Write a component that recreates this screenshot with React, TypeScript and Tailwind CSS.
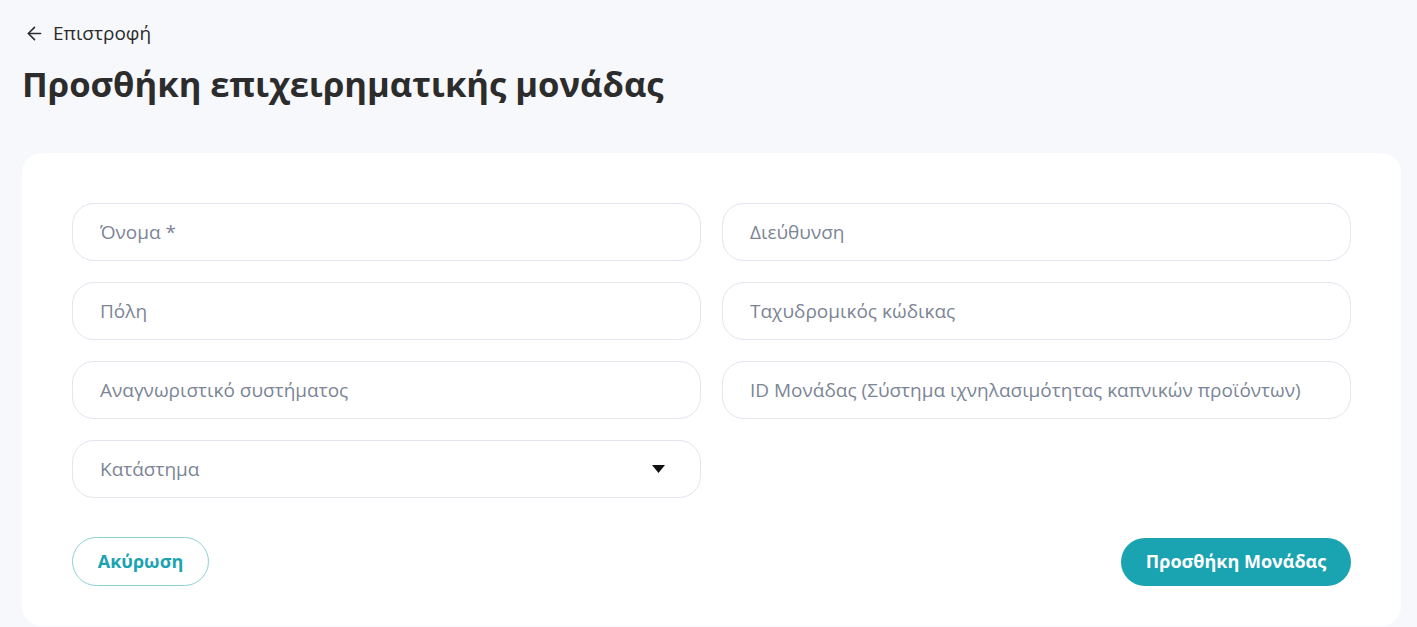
import { ArrowLeft } from 'lucide-react';

const FIELDS: [string, string][] = [
  ['Όνομα *', 'Διεύθυνση'],
  ['Πόλη', 'Ταχυδρομικός κώδικας'],
  ['Αναγνωριστικό συστήματος', 'ID Μονάδας (Σύστημα ιχνηλασιμότητας καπνικών προϊόντων)'],
];

function Field({ placeholder }: { placeholder: string }) {
  return (
    <input
      type="text"
      placeholder={placeholder}
      className="h-[58px] w-full rounded-[22px] border border-[#e3e5ef] bg-white px-[27px] text-[19px] text-[#2d2d2d] placeholder:text-[#7c8596] focus:outline-none"
    />
  );
}

export default function App() {
  return (
    <div
      className="min-h-screen bg-[#f7f8fc] pl-[22px] pr-[16px] pt-[20px] text-[#2b2b2b]"
      style={{ fontFamily: '"Open Sans", "Noto Sans", sans-serif' }}
    >
      <a href="#" className="ml-[2px] flex items-center gap-[8px] text-[19px] leading-[26px] text-[#2b2b2b]">
        <ArrowLeft size={21} strokeWidth={1.8} />
        <span>Επιστροφή</span>
      </a>
      <h1 className="mt-[16px] text-[34.6px] font-bold leading-[44px] text-[#2c2c2c]">
        Προσθήκη επιχειρηματικής μονάδας
      </h1>

      <div className="mt-[47px] rounded-[20px] bg-white px-[50px] pt-[50px] pb-[40px]">
        <div className="grid grid-cols-2 gap-x-[21px] gap-y-[21px]">
          {FIELDS.map(([a, b]) => (
            <>
              <Field key={a} placeholder={a} />
              <Field key={b} placeholder={b} />
            </>
          ))}
          <div className="relative">
            <select
              defaultValue=""
              className="h-[58px] w-full appearance-none rounded-[22px] border border-[#e3e5ef] bg-white px-[27px] text-[19px] text-[#7c8596] focus:outline-none"
            >
              <option value="" disabled>
                Κατάστημα
              </option>
            </select>
            <svg
              className="pointer-events-none absolute right-[36px] top-[25px]"
              width="13"
              height="8"
              viewBox="0 0 13 8"
            >
              <path d="M0 0h13L6.5 8z" fill="#111" />
            </svg>
          </div>
        </div>

        <div className="mt-[39px] flex items-center justify-between">
          <button className="h-[49px] w-[137px] rounded-full border border-[#8fd0d6] bg-white text-[18px] font-bold text-[#1aa3b0]">
            Ακύρωση
          </button>
          <button className="h-[48px] w-[230px] rounded-full bg-[#1aa3b0] text-[18px] font-bold text-white">
            Προσθήκη Μονάδας
          </button>
        </div>
      </div>
    </div>
  );
}
